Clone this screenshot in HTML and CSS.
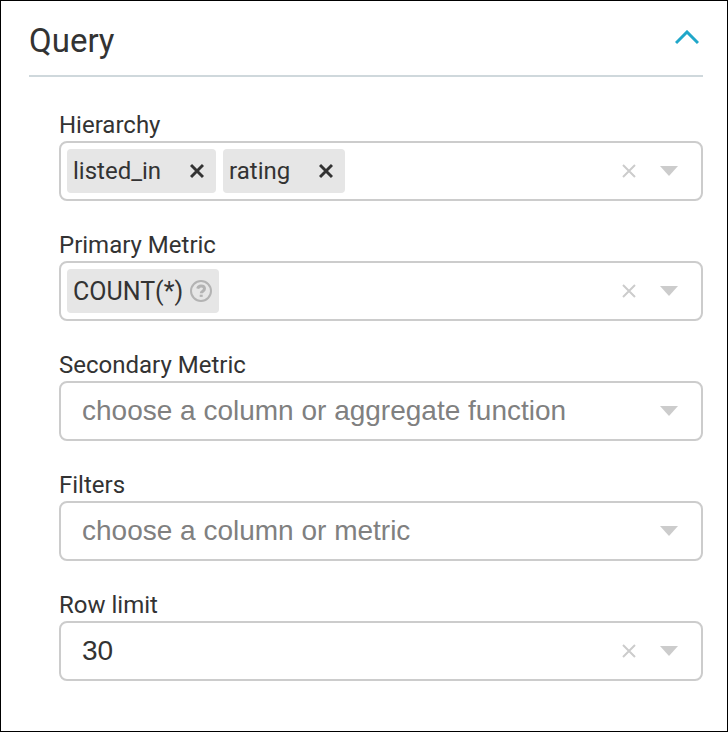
FILE: index.html
```
<!DOCTYPE html>
<html lang="en">
<head>
    <meta charset="UTF-8">
    <title>Query</title>
    <link rel="stylesheet" href="styles.css">
</head>
<body>
    <section class="panel">
        <header class="panel-header">
            <h1 class="panel-title">Query</h1>
            <button type="button" class="collapse" aria-label="Collapse">
                <svg width="24" height="16" viewBox="0 0 24 16"><path d="M1 13 12 2 23 13"/></svg>
            </button>
        </header>

        <form class="fields">
            <div class="field">
                <label for="hierarchy">Hierarchy</label>
                <div class="control">
                    <span class="tag">listed_in
                        <button type="button" class="remove" aria-label="Remove listed_in">
                            <svg width="14" height="16" viewBox="0 0 14 16"><path d="M1 2 13 14M13 2 1 14"/></svg>
                        </button>
                    </span>
                    <span class="tag">rating
                        <button type="button" class="remove" aria-label="Remove rating">
                            <svg width="14" height="16" viewBox="0 0 14 16"><path d="M1 2 13 14M13 2 1 14"/></svg>
                        </button>
                    </span>
                    <input type="text" id="hierarchy">
                    <button type="button" class="clear" aria-label="Clear">
                        <svg width="14" height="14" viewBox="0 0 14 14"><path d="M1 1 13 13M13 1 1 13"/></svg>
                    </button>
                    <button type="button" class="arrow" aria-label="Open"></button>
                </div>
            </div>

            <div class="field">
                <label for="metric">Primary Metric</label>
                <div class="control">
                    <span class="tag metric">COUNT(*)
                        <svg class="help" width="22" height="22" viewBox="0 0 22 22">
                            <circle cx="11" cy="11" r="10"/>
                            <path class="hook" d="M7.7 8.6C8.2 6.8 9.4 6 11 6c2 0 3.5 1 3.5 2.8 0 2.4-3.2 2.3-3.2 4.4"/>
                            <path class="hook" d="M11.2 14.7v2.2"/>
                        </svg>
                    </span>
                    <input type="text" id="metric">
                    <button type="button" class="clear" aria-label="Clear">
                        <svg width="14" height="14" viewBox="0 0 14 14"><path d="M1 1 13 13M13 1 1 13"/></svg>
                    </button>
                    <button type="button" class="arrow" aria-label="Open"></button>
                </div>
            </div>

            <div class="field">
                <label for="secondary">Secondary Metric</label>
                <div class="control">
                    <input type="text" id="secondary" placeholder="choose a column or aggregate function">
                    <button type="button" class="arrow" aria-label="Open"></button>
                </div>
            </div>

            <div class="field">
                <label for="filters">Filters</label>
                <div class="control">
                    <input type="text" id="filters" placeholder="choose a column or metric">
                    <button type="button" class="arrow" aria-label="Open"></button>
                </div>
            </div>

            <div class="field">
                <label for="limit">Row limit</label>
                <div class="control">
                    <input type="text" id="limit" value="30">
                    <button type="button" class="clear" aria-label="Clear">
                        <svg width="14" height="14" viewBox="0 0 14 14"><path d="M1 1 13 13M13 1 1 13"/></svg>
                    </button>
                    <button type="button" class="arrow" aria-label="Open"></button>
                </div>
            </div>
        </form>
    </section>
</body>
</html>
```
FILE: styles.css
```
* {
    box-sizing: border-box;
}

body {
    margin: 0;
    font-family: Roboto, Arial, sans-serif;
    color: #333;
    background: #fff;
}

.panel {
    min-height: 100vh;
    padding: 16px 24px 48px 28px;
    border: 1px solid #000;
}

.panel-header {
    display: flex;
    align-items: center;
    justify-content: space-between;
    height: 60px;
    padding-bottom: 10px;
    border-bottom: 2px solid #cfd8dc;
}

.panel-title {
    margin: 0;
    font-size: 33px;
    font-weight: 400;
    line-height: 48px;
}

button {
    display: flex;
    align-items: center;
    justify-content: center;
    flex: none;
    padding: 0;
    border: 0;
    background: none;
    cursor: pointer;
}

svg {
    display: block;
    fill: none;
}

.collapse {
    padding: 0 4px 6px;
}

.collapse svg {
    stroke: #20a7c9;
    stroke-width: 3;
}

.fields {
    display: flex;
    flex-direction: column;
    gap: 28px;
    padding: 32px 0 0 30px;
}

.field label {
    display: block;
    font-size: 24px;
    line-height: 32px;
}

.control {
    display: flex;
    align-items: center;
    height: 60px;
    padding: 0 23px 0 6px;
    border: 2px solid #ccc;
    border-radius: 8px;
}

.control input {
    flex: 1;
    min-width: 0;
    padding: 0 15px;
    border: 0;
    outline: 0;
    background: none;
    color: #333;
    font-family: "Liberation Sans", Arial, sans-serif;
    font-size: 28px;
}

.control input::placeholder {
    color: #808080;
    opacity: 1;
}

.tag {
    display: flex;
    align-items: center;
    flex: none;
    gap: 29px;
    height: 44px;
    margin-right: 7px;
    padding: 0 12px 0 6px;
    border-radius: 4px;
    background: #e6e6e6;
    font-size: 24px;
}

.metric {
    gap: 7px;
    padding-right: 7px;
    font-size: 25px;
}

.remove svg {
    stroke: #333;
    stroke-width: 3;
}

.help {
    stroke: #b3b3b3;
    stroke-width: 2;
}

.help .hook {
    stroke-width: 3;
}

.clear {
    margin-right: 24px;
}

.clear svg {
    stroke: #ccc;
    stroke-width: 2;
}

.arrow {
    width: 18px;
    height: 10px;
    background: #ccc;
    clip-path: polygon(0 0, 100% 0, 50% 100%);
}
```
